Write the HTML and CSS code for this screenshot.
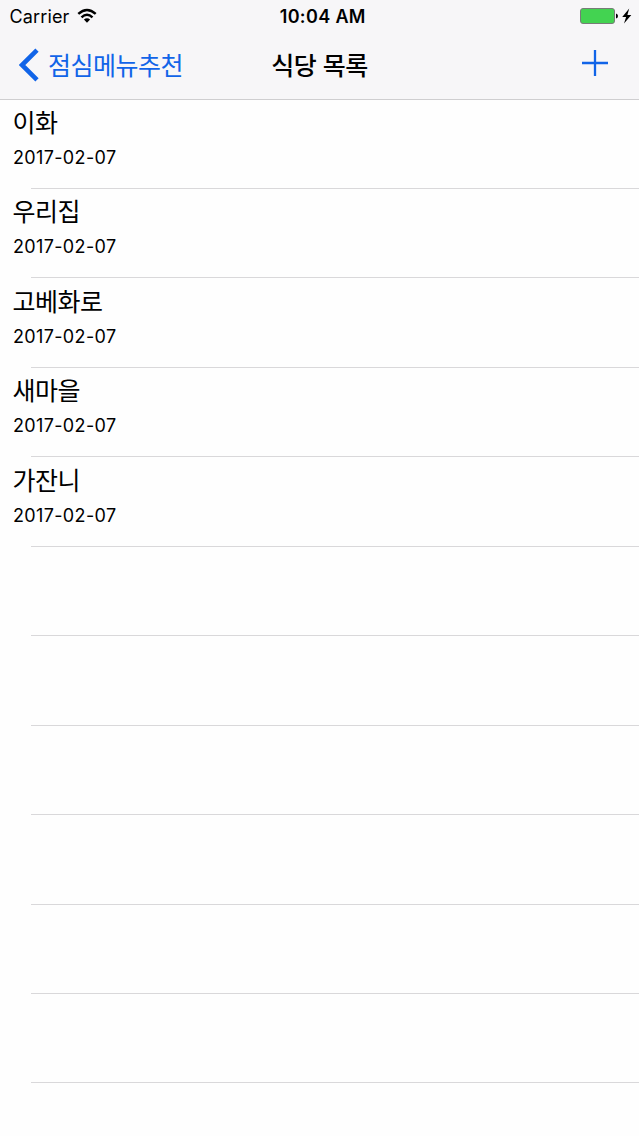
FILE: index.html
```html
<!DOCTYPE html>
<html lang="ko">
<head>
<meta charset="utf-8">
<title>식당 목록</title>
<link rel="stylesheet" href="styles.css">
</head>
<body>
<header class="header">
  <div class="status">
    <div class="status-left">
      <span class="carrier">Carrier</span>
      <svg class="wifi" width="20" height="16" viewBox="0 0 20 16"><g fill="none" stroke="#000" stroke-width="2.5"><path d="M1.3 5.9Q10 -1.9 18.7 5.9"/><path d="M4.5 9.3Q10 4.3 15.5 9.3"/></g><path d="M6.9 11.6Q10 9.1 13.1 11.6L10 14.8Z"/></svg>
    </div>
    <span class="clock">10:04 AM</span>
    <div class="status-right">
      <svg width="54" height="18" viewBox="0 0 54 18"><rect x=".5" y="1.5" width="34" height="15" rx="2.5" fill="#43d351" stroke="#777c77"/><path d="M36 6.5Q38 7 38 9T36 11.5Z"/><path d="M49.2 1.6L42.2 10H46.1L44 16.4L51.3 8H47.4Z"/></svg>
    </div>
  </div>
  <nav class="nav">
    <a class="back"><svg width="20" height="34" viewBox="0 0 20 34"><path d="M18 2.1L3 17L18 31.9" fill="none" stroke="#1164e8" stroke-width="4.6"/></svg><span class="back-label">점심메뉴추천</span></a>
    <h1 class="title">식당 목록</h1>
    <a class="add"><svg width="28" height="28" viewBox="0 0 28 28"><path d="M14 1V27M1 14H27" stroke="#1164e8" stroke-width="2.3"/></svg></a>
  </nav>
</header>
<ul class="list">
  <li class="row"><span class="name">이화</span><span class="date">2017-02-07</span></li>
  <li class="row"><span class="name">우리집</span><span class="date">2017-02-07</span></li>
  <li class="row"><span class="name">고베화로</span><span class="date">2017-02-07</span></li>
  <li class="row"><span class="name">새마을</span><span class="date">2017-02-07</span></li>
  <li class="row"><span class="name">가잔니</span><span class="date">2017-02-07</span></li>
  <li class="row"></li>
  <li class="row"></li>
  <li class="row"></li>
  <li class="row"></li>
  <li class="row"></li>
  <li class="row"></li>
</ul>
</body>
</html>
```
FILE: styles.css
```css
* { box-sizing: border-box; }
body {
  margin: 0;
  height: 1136px;
  overflow: hidden;
  background: #fefefe;
  color: #000;
  font-family: Inter, "Noto Sans CJK KR", sans-serif;
}
.header {
  height: 99.6px;
  background: #f7f6f8;
  border-bottom: 1px solid #cfced0;
}
.status {
  display: grid;
  grid-template-columns: 1fr auto 1fr;
  align-items: start;
  height: 32px;
  padding: 0 5px 0 9.5px;
}
.status-left { display: flex; align-items: center; gap: 7.5px; }
.status-right { display: flex; justify-content: flex-end; padding-top: 7px; }
.wifi { margin-bottom: 2px; }
.carrier { padding-top: 1px; font-size: 18px; line-height: 32px; letter-spacing: 0.15px; }
.clock { padding: 1px 0 0 2px; font-size: 18px; font-weight: 600; line-height: 32px; letter-spacing: 0.35px; }
.nav {
  display: grid;
  grid-template-columns: 1fr auto 1fr;
  align-items: center;
  height: 66px;
  padding: 0 19px;
}
.back { display: flex; align-items: center; gap: 9px; color: #1164e8; }
.back-label, .title, .name {
  font-family: "Noto Sans CJK KR", sans-serif;
  white-space: nowrap;
}
.back-label { padding-bottom: 2px; font-size: 25px; line-height: 36px; letter-spacing: -0.5px; }
.title { margin: 0; padding-bottom: 2px; font-size: 25px; font-weight: 500; line-height: 36px; letter-spacing: -0.5px; }
.add { display: flex; justify-content: flex-end; padding: 0 11px 4px 0; }
.list { margin: 0; padding: 0; list-style: none; }
.row {
  display: flex;
  flex-direction: column;
  height: 89.44px;
  padding: 3.2px 13px 0;
  background: linear-gradient(#d9d8da, #d9d8da) 31px 100% / 100% 1px no-repeat;
}
.name { margin-left: -0.5px; font-size: 25px; line-height: 36px; letter-spacing: -0.5px; }
.date { margin-top: 7px; font-size: 18px; line-height: 24px; letter-spacing: 0.35px; }
```
